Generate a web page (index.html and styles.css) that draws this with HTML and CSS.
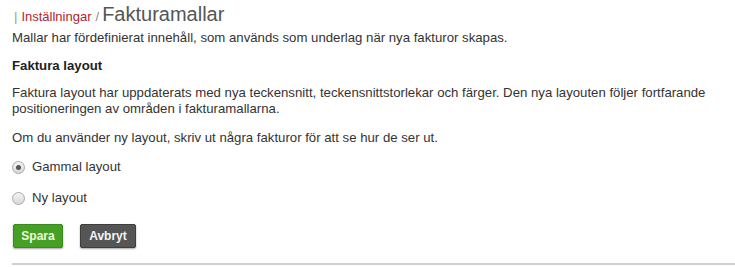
FILE: index.html
```html
<!DOCTYPE html>
<html lang="sv">
<head>
<meta charset="utf-8">
<title>Fakturamallar</title>
<link rel="stylesheet" href="styles.css">
</head>
<body>
<div class="page">
  <div class="crumbs">
    <span class="pipe">|</span>
    <a class="crumb-link" href="#">Inställningar</a>
    <span class="sep">/</span>
    <span class="title">Fakturamallar</span>
  </div>
  <p class="intro">Mallar har fördefinierat innehåll, som används som underlag när nya fakturor skapas.</p>
  <h3 class="section">Faktura layout</h3>
  <p class="para">Faktura layout har uppdaterats med nya teckensnitt, teckensnittstorlekar och färger. Den nya layouten följer fortfarande positioneringen av områden i fakturamallarna.</p>
  <p class="note">Om du använder ny layout, skriv ut några fakturor för att se hur de ser ut.</p>
  <label class="option option-first"><input class="radio" type="radio" name="layout" checked><span>Gammal layout</span></label>
  <label class="option"><input class="radio" type="radio" name="layout"><span>Ny layout</span></label>
  <div class="actions">
    <button class="btn btn-save">Spara</button>
    <button class="btn btn-cancel">Avbryt</button>
  </div>
  <div class="rule"></div>
</div>
</body>
</html>
```

FILE: styles.css
```css
html, body {
  margin: 0;
  padding: 0;
  background: #fff;
}
.page {
  padding: 0 0 0 12px;
  font-family: "Liberation Sans", Arial, sans-serif;
  font-size: 13.2px;
  line-height: 16px;
  color: #333;
}
.crumbs {
  height: 28px;
  display: flex;
  align-items: baseline;
  padding-left: 2px;
  line-height: 28px;
}
.pipe {
  font-size: 13px;
  color: #8aa88a;
  margin-right: 4px;
}
.crumb-link {
  font-size: 13px;
  color: #b0262b;
  text-decoration: none;
}
.sep {
  font-size: 13px;
  color: #888;
  margin: 0 3px 0 4px;
}
.title {
  font-size: 20px;
  color: #555;
}
.intro {
  margin: 2px 0 0 0;
}
.section {
  margin: 12px 0 0 0;
  font-size: 13.2px;
  font-weight: bold;
  color: #222;
  line-height: 16px;
}
.para {
  margin: 11px 0 0 0;
  max-width: 712px;
}
.note {
  margin: 13px 0 0 0;
}
.option {
  display: flex;
  align-items: center;
  height: 16px;
  margin-top: 15px;
}
.option + .option {
  margin-top: 15px;
}
.option-first {
  margin-top: 13px;
}
.radio {
  -webkit-appearance: none;
  appearance: none;
  width: 13px;
  height: 13px;
  margin: 0 7px 0 0;
  border: 1px solid #a9a9a9;
  border-radius: 50%;
  background: linear-gradient(#f4f4f4, #d8d8d8);
  box-sizing: border-box;
  display: grid;
  place-items: center;
}
.radio:checked::after {
  content: "";
  width: 5px;
  height: 5px;
  border-radius: 50%;
  background: #555;
}
.actions {
  display: flex;
  gap: 17px;
  margin-top: 18px;
  padding-left: 1px;
}
.btn {
  font-family: "Liberation Sans", Arial, sans-serif;
  font-size: 12px;
  font-weight: bold;
  height: 24px;
  padding: 0 6px;
  border-radius: 2px;
  cursor: pointer;
  box-shadow: 0 1px 2px rgba(0,0,0,0.35);
}
.btn-save {
  width: 50px;
  background: #46a025;
  border: 1px solid #3a8a1c;
  color: #eaffd8;
}
.btn-cancel {
  width: 56px;
  background: #555;
  border: 1px solid #3e3e3e;
  color: #f4f4f4;
}
.rule {
  height: 2px;
  background: #cfcfcf;
  margin-top: 15px;
}
```
